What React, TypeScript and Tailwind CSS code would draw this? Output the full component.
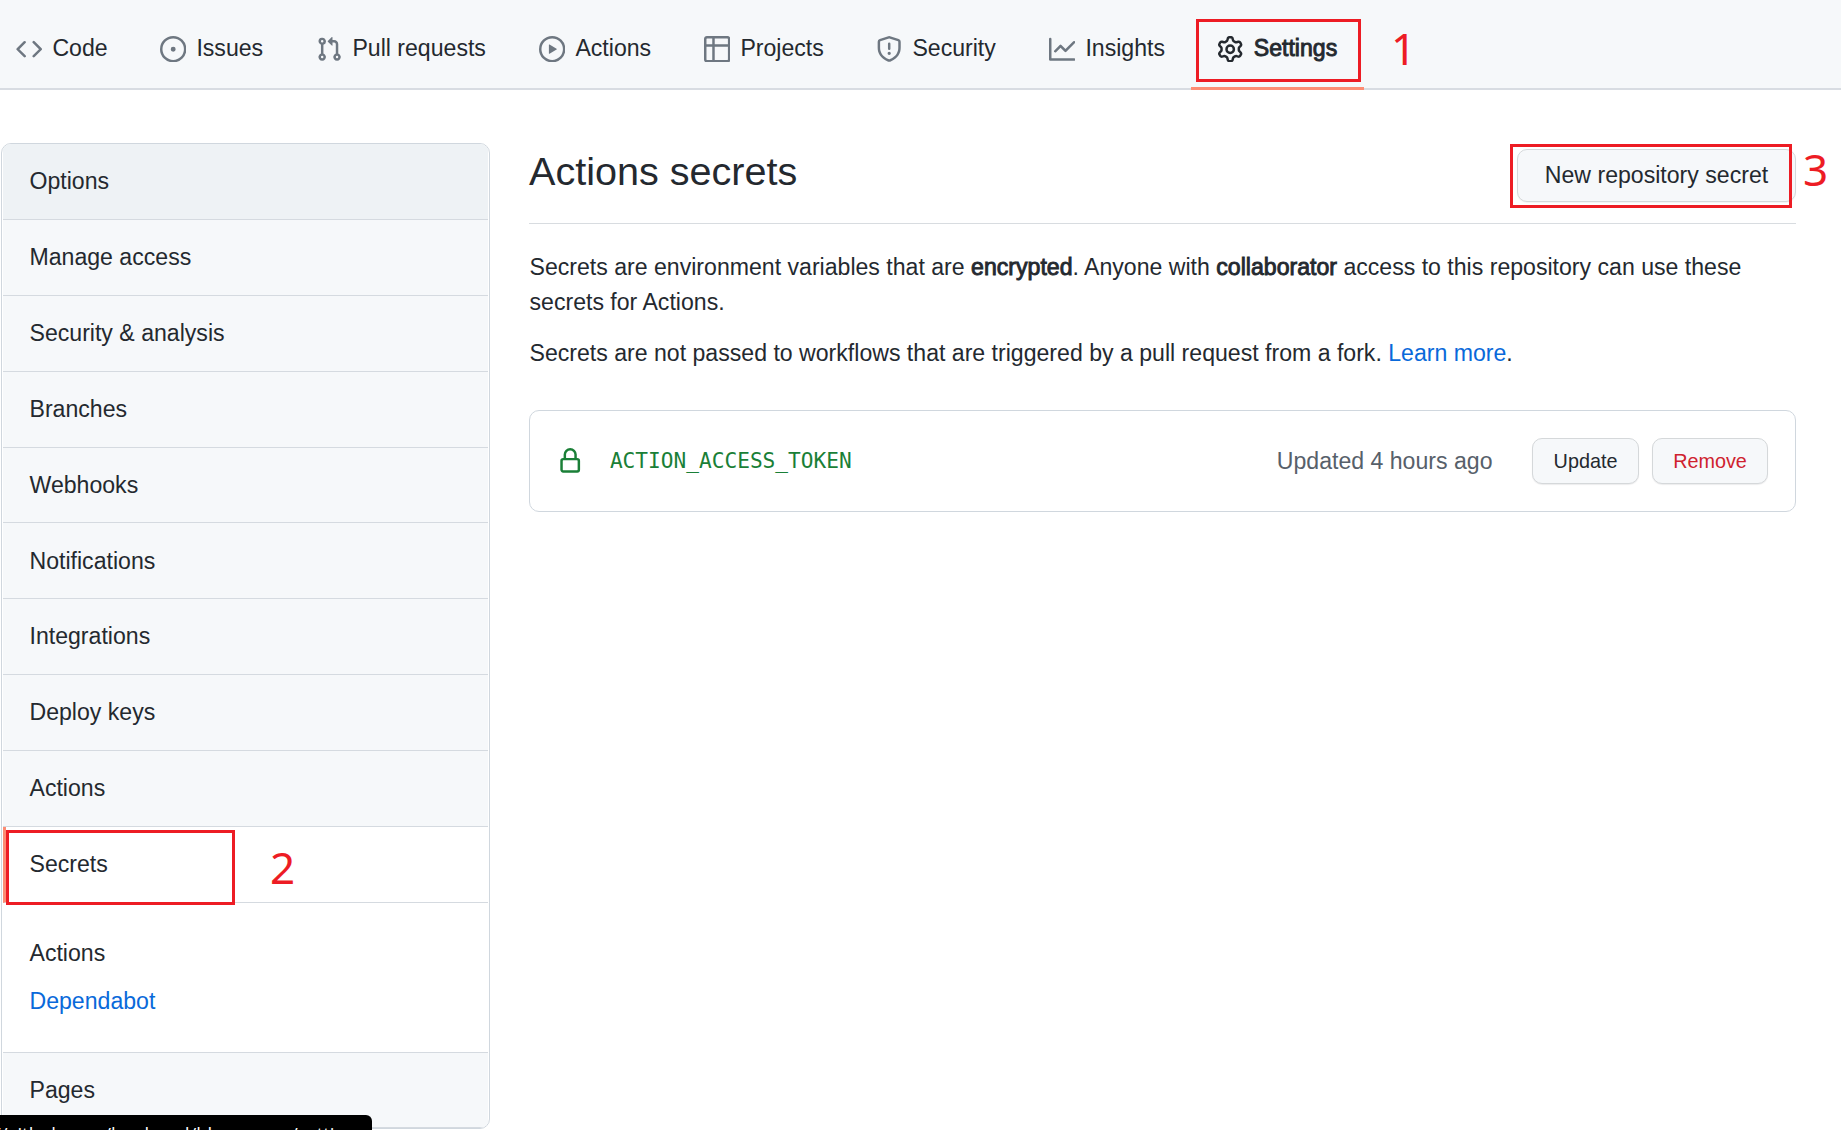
import React from "react";

const icons = {
  code: "M4.72 3.22a.75.75 0 011.06 1.06L2.06 8l3.72 3.72a.75.75 0 11-1.06 1.06L.47 8.53a.75.75 0 010-1.06l4.25-4.25zm6.56 0a.75.75 0 10-1.06 1.06L13.94 8l-3.72 3.72a.75.75 0 101.06 1.06l4.25-4.25a.75.75 0 000-1.06l-4.25-4.25z",
  issue: "M8 9.5a1.5 1.5 0 100-3 1.5 1.5 0 000 3zM8 0a8 8 0 100 16A8 8 0 008 0zM1.5 8a6.5 6.5 0 1113 0 6.5 6.5 0 01-13 0z",
  pull: "M7.177 3.073L9.573.677A.25.25 0 0110 .854v4.792a.25.25 0 01-.427.177L7.177 3.427a.25.25 0 010-.354zM3.75 2.5a.75.75 0 100 1.5.75.75 0 000-1.5zm-2.25.75a2.25 2.25 0 113 2.122v5.256a2.251 2.251 0 11-1.5 0V5.372A2.25 2.25 0 011.5 3.25zM11 2.5h-1V4h1a1 1 0 011 1v5.628a2.251 2.251 0 101.5 0V5A2.5 2.5 0 0011 2.5zm1 10.25a.75.75 0 111.5 0 .75.75 0 01-1.5 0zM3.75 12a.75.75 0 100 1.5.75.75 0 000-1.5z",
  play: "M1.5 8a6.5 6.5 0 1113 0 6.5 6.5 0 01-13 0zM8 0a8 8 0 100 16A8 8 0 008 0zM6.379 5.227A.25.25 0 006 5.442v5.117a.25.25 0 00.379.214l4.264-2.559a.25.25 0 000-.428L6.379 5.227z",
  table: "M0 1.75C0 .784.784 0 1.75 0h12.5C15.216 0 16 .784 16 1.75v3.585a.746.746 0 010 .83v8.085A1.75 1.75 0 0114.25 16H6.309a.748.748 0 01-1.118 0H1.75A1.75 1.75 0 010 14.25V6.165a.746.746 0 010-.83V1.75zM1.5 6.5v7.75c0 .138.112.25.25.25H5v-8H1.5zM6.5 6.5v8h7.75a.25.25 0 00.25-.25V6.5h-8zM14.5 5h-8V1.5h7.75a.25.25 0 01.25.25V5zM5 5V1.5H1.75a.25.25 0 00-.25.25V5H5z",
  shield: "M7.467.133a1.75 1.75 0 011.066 0l5.25 1.68A1.75 1.75 0 0115 3.48V7c0 1.566-.32 3.182-1.303 4.682-.983 1.498-2.585 2.813-5.032 3.855a1.7 1.7 0 01-1.33 0c-2.447-1.042-4.049-2.357-5.032-3.855C1.32 10.182 1 8.566 1 7V3.48a1.75 1.75 0 011.217-1.667l5.25-1.68zm.61 1.429a.25.25 0 00-.153 0l-5.25 1.68a.25.25 0 00-.174.238V7c0 1.358.275 2.666 1.057 3.86.784 1.194 2.121 2.34 4.366 3.297a.2.2 0 00.154 0c2.245-.956 3.582-2.104 4.366-3.298C13.225 9.666 13.5 8.36 13.5 7V3.48a.25.25 0 00-.174-.237l-5.25-1.68zM9 10.5a1 1 0 11-2 0 1 1 0 012 0zm-.25-5.75a.75.75 0 00-1.5 0v3a.75.75 0 001.5 0v-3z",
  graph: "M1.5 1.75a.75.75 0 00-1.5 0v12.5c0 .414.336.75.75.75h14.5a.75.75 0 000-1.5H1.5V1.75zm14.28 2.53a.75.75 0 00-1.06-1.06L10 7.94 7.53 5.47a.75.75 0 00-1.06 0L3.22 8.72a.75.75 0 001.06 1.06L7 7.06l2.47 2.47a.75.75 0 001.06 0l5.25-5.25z",
  gear: "M7.429 1.525a6.593 6.593 0 011.142 0c.036.003.108.036.137.146l.289 1.105c.147.56.55.967.997 1.189.174.086.341.183.501.29.417.278.97.423 1.53.27l1.102-.303c.11-.03.175.016.195.046.219.31.41.641.573.989.014.031.022.11-.059.19l-.815.806c-.411.406-.562.957-.53 1.456a4.588 4.588 0 010 .582c-.032.499.119 1.05.53 1.456l.815.806c.08.08.073.159.059.19a6.494 6.494 0 01-.573.99c-.02.029-.086.074-.195.045l-1.103-.303c-.559-.153-1.112-.008-1.529.27-.16.107-.327.204-.5.29-.449.222-.851.628-.998 1.189l-.289 1.105c-.029.11-.101.143-.137.146a6.613 6.613 0 01-1.142 0c-.036-.003-.108-.037-.137-.146l-.289-1.105c-.147-.56-.55-.967-.997-1.189a4.502 4.502 0 01-.501-.29c-.417-.278-.97-.423-1.53-.27l-1.102.303c-.11.03-.175-.016-.195-.046a6.492 6.492 0 01-.573-.989c-.014-.031-.022-.11.059-.19l.815-.806c.411-.406.562-.957.53-1.456a4.587 4.587 0 010-.582c.032-.499-.119-1.05-.53-1.456l-.815-.806c-.08-.08-.073-.159-.059-.19a6.44 6.44 0 01.573-.99c.02-.029.086-.075.195-.045l1.103.303c.559.153 1.112.008 1.529-.27.16-.107.327-.204.5-.29.449-.222.851-.628.998-1.189l.289-1.105c.029-.11.101-.143.137-.146zM8 0c-.236 0-.47.01-.701.03-.743.065-1.29.615-1.458 1.261l-.29 1.106c-.017.066-.078.158-.211.224a5.994 5.994 0 00-.668.386c-.123.082-.233.09-.3.071L3.27 2.776c-.644-.177-1.392.02-1.82.63a7.977 7.977 0 00-.704 1.217c-.315.675-.111 1.422.363 1.891l.815.806c.05.048.098.147.088.294a6.084 6.084 0 000 .772c.01.147-.038.246-.088.294l-.815.806c-.474.469-.678 1.216-.363 1.891.2.428.436.835.704 1.218.428.609 1.176.806 1.82.63l1.103-.303c.066-.019.176-.011.299.071.213.143.436.272.668.386.133.066.194.158.212.224l.289 1.106c.169.646.715 1.196 1.458 1.26a8.094 8.094 0 001.402 0c.743-.064 1.29-.614 1.458-1.26l.29-1.106c.017-.066.078-.158.211-.224a5.98 5.98 0 00.668-.386c.123-.082.233-.09.3-.071l1.102.302c.644.177 1.392-.02 1.82-.63.268-.382.505-.789.704-1.217.315-.675.111-1.422-.364-1.891l-.814-.806c-.05-.048-.098-.147-.088-.294a6.1 6.1 0 000-.772c-.01-.147.039-.246.088-.294l.814-.806c.475-.469.679-1.216.364-1.891a7.992 7.992 0 00-.704-1.218c-.428-.609-1.176-.806-1.82-.63l-1.103.303c-.066.019-.176.011-.299-.071a5.991 5.991 0 00-.668-.386c-.133-.066-.194-.158-.212-.224L10.16 1.29C9.99.645 9.444.095 8.701.031A8.094 8.094 0 008 0zm1.5 8a1.5 1.5 0 11-3 0 1.5 1.5 0 013 0zM11 8a3 3 0 11-6 0 3 3 0 016 0z",
  lock: "M4 4v2h-.25A1.75 1.75 0 002 7.75v5.5c0 .966.784 1.75 1.75 1.75h8.5A1.75 1.75 0 0014 13.25v-5.5A1.75 1.75 0 0012.25 6H12V4a4 4 0 10-8 0zm6.5 2V4a2.5 2.5 0 10-5 0v2h5zM12 7.5h.25a.25.25 0 01.25.25v5.5a.25.25 0 01-.25.25h-8.5a.25.25 0 01-.25-.25v-5.5a.25.25 0 01.25-.25H12z",
};

function Icon({ name, className = "" }: { name: keyof typeof icons; className?: string }) {
  return (
    <svg viewBox="0 0 16 16" fill="currentColor" fillRule="evenodd" className={`h-[26.4px] w-[26.4px] shrink-0 ${className}`}>
      <path d={icons[name]} />
    </svg>
  );
}

const tabs: { icon: keyof typeof icons; label: string; width: string }[] = [
  { icon: "code", label: "Code", width: "w-[144px]" },
  { icon: "issue", label: "Issues", width: "w-[156px]" },
  { icon: "pull", label: "Pull requests", width: "w-[223px]" },
  { icon: "play", label: "Actions", width: "w-[165px]" },
  { icon: "table", label: "Projects", width: "w-[172px]" },
  { icon: "shield", label: "Security", width: "w-[173px]" },
  { icon: "graph", label: "Insights", width: "w-[142px]" },
];

const menu = ["Manage access", "Security & analysis", "Branches", "Webhooks", "Notifications", "Integrations", "Deploy keys", "Actions"];

const row = "flex h-[75.9px] shrink-0 items-center border-b border-[#d5dae0] pl-[26.5px]";

function Strong({ children }: { children: React.ReactNode }) {
  return <span className="[-webkit-text-stroke:0.9px_#24292f]">{children}</span>;
}

export default function App() {
  return (
    <div className="relative h-[1130px] w-[1841px] overflow-hidden bg-white font-['Liberation_Sans',Arial,sans-serif] text-[23.1px] leading-[34.6px] text-[#24292f]">
      <nav className="flex h-[90px] border-b-2 border-[#d8dce2] bg-[#f6f8fa] pl-[16px]">
        {tabs.map((t) => (
          <a key={t.label} className={`flex h-[98px] shrink-0 items-center gap-[10px] whitespace-nowrap ${t.width}`}>
            <Icon name={t.icon} className="text-[#6e7781]" />
            <span className="-mt-px">{t.label}</span>
          </a>
        ))}
        <a className="relative flex h-[90px] w-[173px] shrink-0 items-center gap-[10px] border-b-[3px] border-[#fd8c73] pl-[26.4px] pt-[11px]">
          <Icon name="gear" />
          <span className="-mt-px">
            <Strong>Settings</Strong>
          </span>
          <span className="absolute left-[5px] top-[19px] h-[63px] w-[165px] border-[3px] border-[#ed1c24]" />
        </a>
      </nav>

      <div className="flex">
        <aside className="ml-[1px] mt-[53px] flex h-[986px] w-[489px] shrink-0 flex-col overflow-hidden rounded-[10px] border border-[#d0d7de] px-[1px]">
          <a className={`${row} bg-[#eef2f5]`}>Options</a>
          {menu.map((m) => (
            <a key={m} className={`${row} bg-[#f6f8fa]`}>
              {m}
            </a>
          ))}
          <a className={`${row} border-l-[3px] border-l-[#fd8c73] !pl-[23.5px]`}>Secrets</a>
          <div className="flex h-[149.6px] shrink-0 flex-col gap-[13.5px] border-b border-[#d5dae0] pl-[26.5px] pt-[33px]">
            <a>Actions</a>
            <a className="text-[#0969da]">Dependabot</a>
          </div>
          <a className={`${row} bg-[#f6f8fa]`}>Pages</a>
        </aside>

        <main className="ml-[39px] mt-[53px] w-[1267px] shrink-0">
          <div className="flex h-[81px] items-start justify-between border-b border-[#d8dce0]">
            <h1 className="text-[39.6px] leading-[57px]">Actions secrets</h1>
            <button className="mt-[6px] h-[53px] w-[279px] rounded-[10px] border border-[#d5d8da] bg-[#f6f8fa] shadow-[0_1px_1px_rgba(27,31,36,0.05)]">
              New repository secret
            </button>
          </div>
          <p className="ml-[0.5px] mt-[26px]">
            Secrets are environment variables that are <Strong>encrypted</Strong>. Anyone with <Strong>collaborator</Strong> access to this
            repository can use these
            <br />
            secrets for Actions.
          </p>
          <p className="ml-[0.5px] mt-[16.5px]">
            Secrets are not passed to workflows that are triggered by a pull request from a fork.{" "}
            <a className="text-[#0969da]">Learn more</a>.
          </p>
          <div className="mt-[40px] flex h-[102px] items-center rounded-[10px] border border-[#d0d7de] pl-[27px] pr-[27px]">
            <Icon name="lock" className="text-[#1a7f37]" />
            <code className="ml-[26.5px] font-['DejaVu_Sans_Mono',monospace] text-[21.15px] text-[#1a7f37]">ACTION_ACCESS_TOKEN</code>
            <span className="ml-auto text-[#57606a]">Updated 4 hours ago</span>
            <button className="ml-[39.5px] h-[46px] w-[107px] rounded-[10px] border border-[#d5d8da] bg-[#f6f8fa] text-[19.8px] shadow-[0_1px_1px_rgba(27,31,36,0.08)]">
              Update
            </button>
            <button className="ml-[13px] h-[46px] w-[116px] rounded-[10px] border border-[#d5d8da] bg-[#f6f8fa] text-[19.8px] text-[#cf222e] shadow-[0_1px_1px_rgba(27,31,36,0.08)]">
              Remove
            </button>
          </div>
        </main>
      </div>

      <span className="absolute left-[6px] top-[830px] h-[75px] w-[229px] border-[3px] border-[#ed1c24]" />
      <span className="absolute left-[1510px] top-[144px] h-[64px] w-[282px] border-[3px] border-[#ed1c24]" />
      <span className="absolute left-[1391px] top-[18px] font-['Noto_Sans',sans-serif] text-[44px] leading-[60px] text-[#ed1c24]">1</span>
      <span className="absolute left-[270px] top-[837px] font-['Noto_Sans',sans-serif] text-[44px] leading-[60px] text-[#ed1c24]">2</span>
      <span className="absolute left-[1803px] top-[139px] font-['Noto_Sans',sans-serif] text-[44px] leading-[60px] text-[#ed1c24]">3</span>

      <div className="absolute left-0 top-[1115px] h-[15px] w-[372px] overflow-hidden rounded-tr-[6px] bg-black">
        <div className="-ml-[6px] mt-[6px] whitespace-nowrap font-['Open_Sans',sans-serif] text-[18.4px] leading-[26px] text-white">
          //github.com/huohuod/blogsource/settings
        </div>
      </div>
    </div>
  );
}
